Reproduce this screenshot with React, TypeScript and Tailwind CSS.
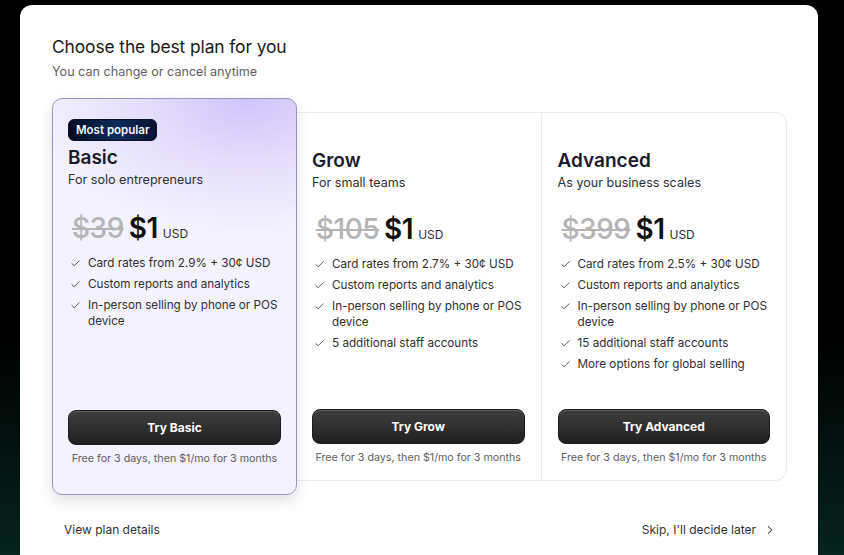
import { Check, ChevronRight } from "lucide-react";

type Plan = {
  name: string;
  desc: string;
  was: string;
  features: string[];
  cta: string;
};

const plans: Plan[] = [
  {
    name: "Basic",
    desc: "For solo entrepreneurs",
    was: "$39",
    features: ["Card rates from 2.9% + 30¢ USD", "Custom reports and analytics", "In-person selling by phone or POS device"],
    cta: "Try Basic",
  },
  {
    name: "Grow",
    desc: "For small teams",
    was: "$105",
    features: [
      "Card rates from 2.7% + 30¢ USD",
      "Custom reports and analytics",
      "In-person selling by phone or POS device",
      "5 additional staff accounts",
    ],
    cta: "Try Grow",
  },
  {
    name: "Advanced",
    desc: "As your business scales",
    was: "$399",
    features: [
      "Card rates from 2.5% + 30¢ USD",
      "Custom reports and analytics",
      "In-person selling by phone or POS device",
      "15 additional staff accounts",
      "More options for global selling",
    ],
    cta: "Try Advanced",
  },
];

function Price({ was }: { was: string }) {
  return (
    <div className="flex items-baseline gap-[5px] h-[36px] leading-[36px]">
      <span className="text-[28px] font-medium tracking-[-0.5px] text-[#b5b5b5] line-through decoration-[2px]">{was}</span>
      <span className="text-[28px] font-semibold tracking-[-0.5px] text-[#111]">$1</span>
      <span className="text-[12px] text-[#303030]">USD</span>
    </div>
  );
}

function Features({ items }: { items: string[] }) {
  return (
    <ul className="flex flex-col gap-[5px]">
      {items.map((f) => (
        <li key={f} className="flex items-start gap-[7px] text-[11.7px] leading-[16px] text-[#303030]">
          <Check size={11} strokeWidth={1.75} className="mt-[3px] ml-[2px] shrink-0 text-[#303030]" />
          <span>{f}</span>
        </li>
      ))}
    </ul>
  );
}

function Cta({ label }: { label: string }) {
  return (
    <div className="flex flex-col items-center gap-[6px]">
      <button className="w-full h-[35px] rounded-[8px] border border-[#1b1b1b] bg-[linear-gradient(180deg,#3d3d3d_0%,#2f2f2f_55%,#1f1f1f_100%)] shadow-[inset_0_1px_0_rgba(255,255,255,0.18)] text-[12px] font-bold text-white">
        {label}
      </button>
      <p className="text-[10.7px] leading-[16px] text-[#616161]">Free for 3 days, then $1/mo for 3 months</p>
    </div>
  );
}

function Column({ plan, last }: { plan: Plan; last?: boolean }) {
  return (
    <div className={`flex-1 flex flex-col px-[16px] pt-[36px] pb-[14px] ${last ? "" : "border-r border-[#ececec]"}`}>
      <h3 className="text-[19px] leading-[24px] font-semibold text-[#1a1a2e]">{plan.name}</h3>
      <p className="mt-[-1px] text-[12.6px] leading-[22px] text-[#303030]">{plan.desc}</p>
      <div className="mt-[17px] ml-[4px]">
        <Price was={plan.was} />
      </div>
      <div className="mt-[9px]">
        <Features items={plan.features} />
      </div>
      <div className="mt-auto">
        <Cta label={plan.cta} />
      </div>
    </div>
  );
}

export default function App() {
  const basic = plans[0];
  return (
    <div className="h-[555px] overflow-hidden bg-[linear-gradient(180deg,#000_0%,#000_60%,#06231d_100%)] pt-[5px] px-[20px] pr-[26px]" style={{ fontFamily: "Inter, 'Noto Sans', sans-serif" }}>
      <div className="h-[570px] rounded-[12px] bg-white pt-[30px] pl-[32px] pr-[31px]">
        <h1 className="text-[17.4px] leading-[24px] font-normal text-[#1a1a1a] tracking-[-0.1px]">Choose the best plan for you</h1>
        <p className="mt-[4px] text-[12.6px] leading-[18px] text-[#616161]">You can change or cancel anytime</p>

        <div className="mt-[17px] flex items-center">
          <div className="relative z-10 w-[245px] h-[397px] shrink-0 rounded-[10px] border border-[#9894bf] bg-[radial-gradient(ellipse_120%_45%_at_80%_0%,#d0c4fa_0%,#e4ddfc_35%,#f4f2fe_75%)] shadow-[0_6px_14px_rgba(0,0,0,0.12)] flex flex-col px-[15px] pt-[20px] pb-[27px]">
            <span className="self-start h-[22px] px-[7px] rounded-[6px] border border-[#0a1226] bg-[linear-gradient(90deg,#040b1f_0%,#0f2c5c_55%,#071430_100%)] text-[11.5px] leading-[20px] font-semibold text-[#eef7ff]">
              Most popular
            </span>
            <h3 className="mt-[5px] text-[19px] leading-[24px] font-semibold text-[#1a1a2e]">{basic.name}</h3>
            <p className="mt-[-1px] text-[12.6px] leading-[22px] text-[#303030]">{basic.desc}</p>
            <div className="mt-[19px] ml-[4px]">
              <Price was={basic.was} />
            </div>
            <div className="mt-[9px]">
              <Features items={basic.features} />
            </div>
            <div className="mt-auto">
              <Cta label={basic.cta} />
            </div>
          </div>
          <div className="flex flex-1 h-[369px] -ml-px rounded-r-[12px] border border-l-0 border-[#ececec]">
            <Column plan={plans[1]} />
            <Column plan={plans[2]} last />
          </div>
        </div>

        <div className="mt-[27px] flex items-center justify-between pl-[12px] pr-[10px] text-[12px] leading-[16px] text-[#303030]">
          <span>View plan details</span>
          <span className="flex items-center gap-[7px]">
            Skip, I'll decide later
            <ChevronRight size={14} strokeWidth={1.75} />
          </span>
        </div>
      </div>
    </div>
  );
}
